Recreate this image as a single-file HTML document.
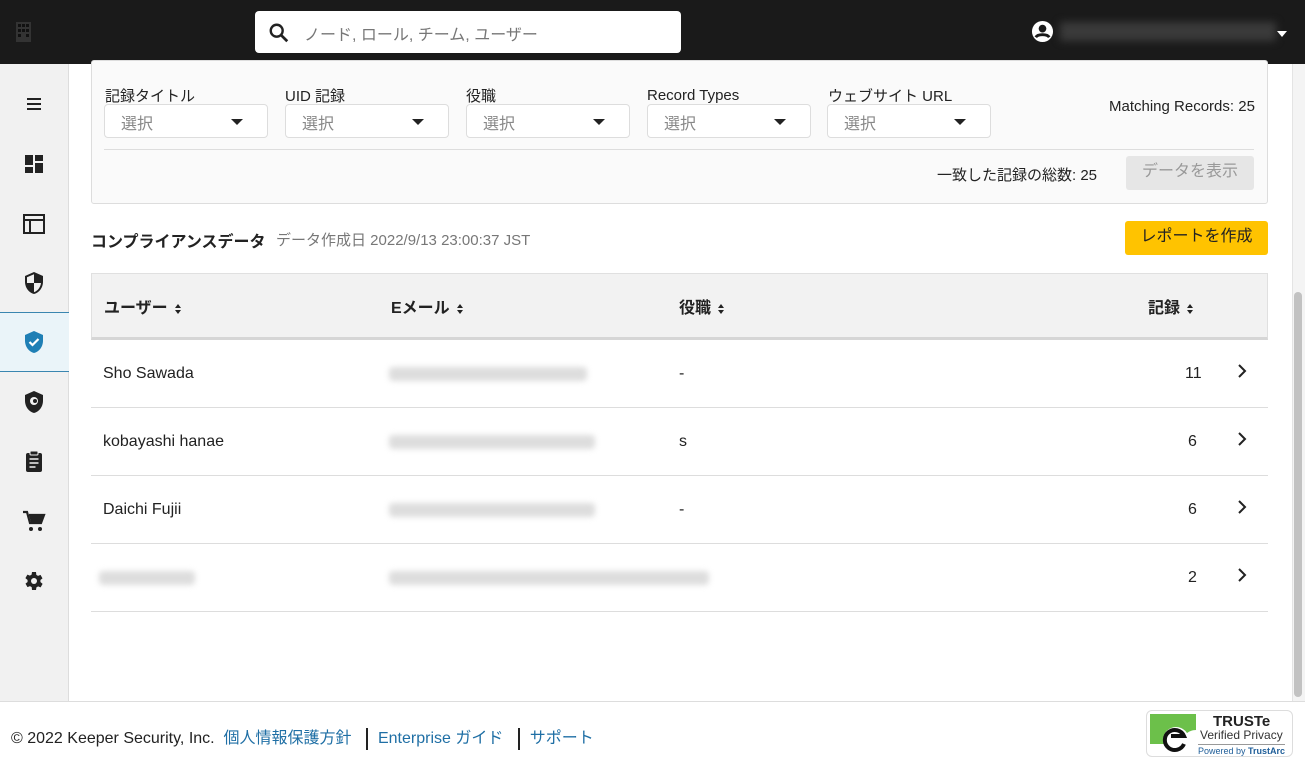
<!DOCTYPE html>
<html><head><meta charset="utf-8"><style>
*{box-sizing:border-box;margin:0;padding:0}
body{width:1305px;height:768px;overflow:hidden;background:#fff;font-family:"Liberation Sans","Noto Sans CJK JP",sans-serif;color:#222;position:relative}
.top{position:absolute;left:0;top:0;width:1305px;height:64px;background:#1a1a1a}
.search{position:absolute;left:255px;top:11px;width:426px;height:42px;background:#fff;border-radius:4px}
.search span{position:absolute;left:49px;top:10px;font-size:16px;color:#777}
.side{position:absolute;left:0;top:64px;width:69px;height:637px;background:#f1f1f1;border-right:1px solid #ddd}
.ic{position:absolute;left:22px;width:24px;height:24px}
.sel{position:absolute;left:0;top:248px;width:69px;height:60px;background:#eaf4f9;border-top:1.5px solid #3a86b0;border-bottom:1.5px solid #3a86b0}
.panel{position:absolute;left:91px;top:60px;width:1177px;height:144px;background:#fafafa;border:1px solid #ddd;border-radius:3px}
.lab{position:absolute;top:85px;font-size:15px;color:#222}
.dd{position:absolute;top:104px;width:164px;height:34px;background:#fff;border:1px solid #ddd;border-radius:4px}
.dd span{position:absolute;left:16px;top:5px;font-size:16px;color:#888}
.dd i{position:absolute;right:24px;top:14px;border-left:6px solid transparent;border-right:6px solid transparent;border-top:6px solid #222}
.t{position:absolute;white-space:nowrap}
.blur{position:absolute;height:14px;background:#ddd;filter:blur(3px);border-radius:4px}
.row{position:absolute;left:91px;width:1177px;height:68px;border-bottom:1px solid #ddd}
.row .t{top:25px;font-size:16px}
.chev{position:absolute;left:1146px;top:24px;width:10px;height:14px}
.foot{position:absolute;left:0;top:701px;width:1305px;height:67px;border-top:1px solid #ddd;background:#fff}
a{color:#1f6fa5;text-decoration:none}
.srt{display:inline-block;vertical-align:middle;margin-left:6px;width:8px;height:12px}
</style></head><body>
<div class="top">
 <svg style="position:absolute;left:15px;top:22px" width="17" height="20" viewBox="0 0 17 20"><rect x="1" y="0" width="15" height="20" fill="#333"/><g fill="#111"><rect x="3" y="2" width="3" height="3"/><rect x="7" y="2" width="3" height="3"/><rect x="11" y="2" width="3" height="3"/><rect x="3" y="7" width="3" height="3"/><rect x="7" y="7" width="3" height="3"/><rect x="11" y="7" width="3" height="3"/><rect x="3" y="12" width="3" height="3"/><rect x="11" y="12" width="3" height="3"/></g></svg>
 <div class="search"><svg style="position:absolute;left:13px;top:11px" width="22" height="22" viewBox="0 0 24 24"><circle cx="9.5" cy="9.5" r="6.5" fill="none" stroke="#222" stroke-width="2.6"/><path d="M14.5 14.5L21 21" stroke="#222" stroke-width="3"/></svg><span>ノード, ロール, チーム, ユーザー</span></div>
 <svg style="position:absolute;left:1031px;top:20px" width="23" height="23" viewBox="0 0 24 24"><circle cx="12" cy="12" r="11" fill="#fff"/><circle cx="12" cy="9" r="4" fill="#1a1a1a"/><path d="M5 18c2-3.5 12-3.5 14 0" stroke="#1a1a1a" stroke-width="3" fill="none"/></svg>
 <div style="position:absolute;left:1060px;top:22px;width:216px;height:19px;background:#3a3a3a;filter:blur(4px)"></div>
 <div style="position:absolute;left:1277px;top:31px;border-left:5px solid transparent;border-right:5px solid transparent;border-top:6px solid #fff"></div>
</div>
<div class="side">
 <div class="sel"></div>
 <svg class="ic" style="top:28px" viewBox="0 0 24 24"><path d="M5 7h14M5 12h14M5 17h14" stroke="#222" stroke-width="2"/></svg>
 <svg class="ic" style="top:88px" viewBox="0 0 24 24"><path d="M3 3h8v10H3zM13 3h8v6h-8zM13 11h8v10h-8zM3 15h8v6H3z" fill="#222"/></svg>
 <svg class="ic" style="top:148px" viewBox="0 0 24 24"><rect x="2" y="3" width="20" height="18" fill="none" stroke="#222" stroke-width="2"/><path d="M2 8h20M8 8v13" stroke="#222" stroke-width="2"/></svg>
 <svg class="ic" style="top:207px" viewBox="0 0 24 24"><path d="M12 1L3 5v6c0 5.5 3.8 10.7 9 12 5.2-1.3 9-6.5 9-12V5z" fill="#222"/><path d="M12 3.2v8.8H5V6.3zM12 12h7c-.5 4.2-3.3 8-7 9.1z" fill="#f1f1f1"/></svg>
 <svg class="ic" style="top:266px" viewBox="0 0 24 24"><path d="M12 1L3 5v6c0 5.5 3.8 10.7 9 12 5.2-1.3 9-6.5 9-12V5z" fill="#1f7fb5"/><path d="M7.5 12l3 3 6-6" stroke="#fff" stroke-width="2.2" fill="none"/></svg>
 <svg class="ic" style="top:326px" viewBox="0 0 24 24"><path d="M12 1L3 5v6c0 5.5 3.8 10.7 9 12 5.2-1.3 9-6.5 9-12V5z" fill="#222"/><circle cx="12" cy="11" r="4" fill="#f1f1f1"/><circle cx="13" cy="11" r="2" fill="#222"/></svg>
 <svg class="ic" style="top:385px" viewBox="0 0 24 24"><rect x="4" y="4" width="16" height="19" rx="2" fill="#222"/><rect x="8" y="2" width="8" height="4" rx="1" fill="#222" stroke="#f1f1f1"/><path d="M7.5 10h9M7.5 14h9M7.5 18h6" stroke="#f1f1f1" stroke-width="1.6"/></svg>
 <svg class="ic" style="top:445px" viewBox="0 0 24 24"><path d="M1 3h4l3 11h11l3-8H7" fill="none" stroke="#222" stroke-width="2.2"/><path d="M7 6h15l-3 8H9z" fill="#222"/><circle cx="9" cy="20" r="2" fill="#222"/><circle cx="18" cy="20" r="2" fill="#222"/></svg>
 <svg class="ic" style="top:505px" viewBox="0 0 24 24"><path d="M19.4 13a7.5 7.5 0 000-2l2.1-1.6-2-3.5-2.5 1a7 7 0 00-1.7-1L15 3h-4l-.4 2.6a7 7 0 00-1.7 1l-2.5-1-2 3.5L6.6 11a7.5 7.5 0 000 2l-2.1 1.6 2 3.5 2.5-1a7 7 0 001.7 1L11 21h4l.4-2.6a7 7 0 001.7-1l2.5 1 2-3.5z" fill="#222" transform="translate(-1 0)"/><circle cx="12" cy="12" r="3" fill="#f1f1f1"/></svg>
</div>
<div style="position:absolute;left:1292px;top:64px;width:13px;height:637px;background:#f4f4f4;border-left:1px solid #e4e4e4"></div>
<div style="position:absolute;left:1294px;top:292px;width:8px;height:405px;background:#c2c2c2;border-radius:4px"></div>
<div class="panel"></div>
<div class="lab" style="left:105px">記録タイトル</div>
<div class="lab" style="left:285px">UID 記録</div>
<div class="lab" style="left:466px">役職</div>
<div class="lab" style="left:647px;top:87px">Record Types</div>
<div class="lab" style="left:828px">ウェブサイト URL</div>
<div class="dd" style="left:104px"><span>選択</span><i></i></div>
<div class="dd" style="left:285px"><span>選択</span><i></i></div>
<div class="dd" style="left:466px"><span>選択</span><i></i></div>
<div class="dd" style="left:647px"><span>選択</span><i></i></div>
<div class="dd" style="left:827px"><span>選択</span><i></i></div>
<div class="t" style="left:1109px;top:98px;font-size:15px">Matching Records: 25</div>
<div style="position:absolute;left:104px;top:149px;width:1150px;height:1px;background:#ddd"></div>
<div class="t" style="left:937px;top:164px;font-size:15px">一致した記録の総数: 25</div>
<div style="position:absolute;left:1126px;top:156px;width:128px;height:34px;background:#e6e6e6;border-radius:3px;color:#999;font-size:16px;text-align:center;line-height:32px">データを表示</div>
<div class="t" style="left:91px;top:228px;font-size:16px;font-weight:bold">コンプライアンスデータ</div>
<div class="t" style="left:276px;top:229px;font-size:15px;color:#777">データ作成日 2022/9/13 23:00:37 JST</div>
<div style="position:absolute;left:1125px;top:221px;width:143px;height:34px;background:#ffc300;border-radius:3px;font-size:16px;text-align:center;line-height:32px">レポートを作成</div>
<div style="position:absolute;left:91px;top:273px;width:1177px;height:67px;background:#f2f2f2;border:1px solid #e0e0e0;border-bottom:3px solid #d6d6d6"></div>
<svg width="0" height="0" style="position:absolute"><defs><g id="s"><path d="M1 5L4 1 7 5zM1 7L4 11 7 7z" fill="#222"/></g></defs></svg>
<div class="t" style="left:104px;top:294px;font-size:16px;font-weight:bold">ユーザー<svg class="srt" viewBox="0 0 8 12"><use href="#s"/></svg></div>
<div class="t" style="left:391px;top:294px;font-size:16px;font-weight:bold">Eメール<svg class="srt" viewBox="0 0 8 12"><use href="#s"/></svg></div>
<div class="t" style="left:679px;top:294px;font-size:16px;font-weight:bold">役職<svg class="srt" viewBox="0 0 8 12"><use href="#s"/></svg></div>
<div class="t" style="left:1148px;top:294px;font-size:16px;font-weight:bold">記録<svg class="srt" viewBox="0 0 8 12"><use href="#s"/></svg></div>
<div class="row" style="top:340px"><div class="t" style="left:12px">Sho Sawada</div><div class="blur" style="left:298px;top:27px;width:198px"></div><div class="t" style="left:588px">-</div><div class="t" style="left:1094px">11</div><svg class="chev" viewBox="0 0 10 14"><path d="M2 1l6 6-6 6" stroke="#222" stroke-width="2" fill="none"/></svg></div>
<div class="row" style="top:408px"><div class="t" style="left:12px">kobayashi hanae</div><div class="blur" style="left:298px;top:27px;width:206px"></div><div class="t" style="left:588px">s</div><div class="t" style="left:1097px">6</div><svg class="chev" viewBox="0 0 10 14"><path d="M2 1l6 6-6 6" stroke="#222" stroke-width="2" fill="none"/></svg></div>
<div class="row" style="top:476px"><div class="t" style="left:12px">Daichi Fujii</div><div class="blur" style="left:298px;top:27px;width:206px"></div><div class="t" style="left:588px">-</div><div class="t" style="left:1097px">6</div><svg class="chev" viewBox="0 0 10 14"><path d="M2 1l6 6-6 6" stroke="#222" stroke-width="2" fill="none"/></svg></div>
<div class="row" style="top:544px"><div class="blur" style="left:8px;top:27px;width:96px"></div><div class="blur" style="left:298px;top:27px;width:320px"></div><div class="t" style="left:1097px">2</div><svg class="chev" viewBox="0 0 10 14"><path d="M2 1l6 6-6 6" stroke="#222" stroke-width="2" fill="none"/></svg></div>
<div class="foot">
 <div class="t" style="left:11px;top:22px;font-size:16px">© 2022 Keeper Security, Inc. &nbsp;<a>個人情報保護方針</a> <span style="display:inline-block;width:2px;height:22px;background:#222;vertical-align:middle;margin:0 10px"></span><a>Enterprise ガイド</a> <span style="display:inline-block;width:2px;height:22px;background:#222;vertical-align:middle;margin:0 10px"></span><a>サポート</a></div>
 <div style="position:absolute;left:1146px;top:8px;width:147px;height:47px;border:1px solid #ddd;border-radius:6px;background:#fff">
  <svg style="position:absolute;left:3px;top:3px" width="46" height="40" viewBox="0 0 46 40"><path d="M0 0h46v16c-8 0-14 6-14 14H0z" fill="#6cc04a"/><circle cx="26" cy="26" r="13" fill="#fff"/><path d="M34 30a10 10 0 1 1 0-8H21" stroke="#111" stroke-width="4" fill="none"/></svg>
  <div class="t" style="left:66px;top:2px;font-size:15px;font-weight:bold">TRUSTe</div>
  <div class="t" style="left:53px;top:17px;font-size:12px;color:#333">Verified Privacy</div>
  <div class="t" style="left:51px;top:33px;font-size:9px;color:#1f5e99;border-top:1px solid #999;padding-top:1px">Powered by <b>TrustArc</b></div>
 </div>
</div>
</body></html>
